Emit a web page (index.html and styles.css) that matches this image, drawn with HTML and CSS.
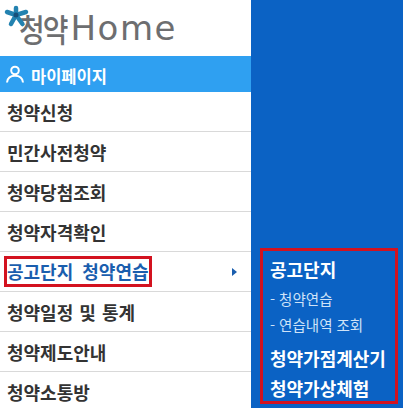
FILE: index.html
```html
<!DOCTYPE html>
<html lang="ko">
<head>
    <meta charset="UTF-8">
    <title>청약Home</title>
    <link rel="stylesheet" href="styles.css">
</head>
<body>
    <div class="layout">
        <aside class="sidebar">
            <div class="logo">
                <span class="logo-ko">청약</span><span class="logo-en">Home</span>
                <svg class="logo-star" width="26" height="26" viewBox="0 0 26 26" fill="none" stroke="#2382b0" stroke-width="4.500" stroke-linecap="round">
                    <path d="M13 12 L13 5"/>
                    <path d="M13 12 L23 9"/>
                    <path d="M13 12 L19.500 21"/>
                    <path d="M13 12 L8 21"/>
                    <path d="M13 12 L4 9"/>
                    <circle cx="13" cy="12" r="2.500" fill="#17507a" stroke="none"/>
                </svg>
            </div>
            <div class="mypage">
                <svg width="18" height="18" viewBox="0 0 18 18" fill="none" stroke="#fff" stroke-width="2">
                    <circle cx="9" cy="5.500" r="3.800"/>
                    <path d="M1 17.500 C1.500 12.800 5 10.800 9 10.800 C13 10.800 16.500 12.800 17 17.500"/>
                </svg>
                <span class="mypage-label">마이페이지</span>
            </div>
            <ul class="menu">
                <li class="menu-item">청약신청</li>
                <li class="menu-item">민간사전청약</li>
                <li class="menu-item">청약당첨조회</li>
                <li class="menu-item">청약자격확인</li>
                <li class="menu-item active">
                    <span class="mark">공고단지 청약연습</span>
                    <span class="arrow"></span>
                </li>
                <li class="menu-item">청약일정 및 통계</li>
                <li class="menu-item">청약제도안내</li>
                <li class="menu-item">청약소통방</li>
            </ul>
        </aside>
        <nav class="submenu">
            <div class="sub-box">
                <div class="sub-title">공고단지</div>
                <div class="sub-links">
                    <div class="sub-link">- 청약연습</div>
                    <div class="sub-link">- 연습내역 조회</div>
                </div>
                <div class="sub-title">청약가점계산기</div>
                <div class="sub-title">청약가상체험</div>
            </div>
        </nav>
    </div>
</body>
</html>
```

FILE: styles.css
```css
body {
    margin: 0;
    overflow: hidden;
    font-family: "Noto Sans CJK KR", "Noto Sans", sans-serif;
}

.layout {
    display: flex;
    height: 408px;
}

.sidebar {
    width: 251px;
    background-color: #fff;
    overflow: hidden;
}

.logo {
    display: flex;
    align-items: center;
    height: 56px;
    padding-left: 19px;
    position: relative;
    box-sizing: border-box;
    color: #6d6e70;
}

.logo-star {
    position: absolute;
    left: 3px;
    top: 3px;
}

.logo-ko {
    font-size: 28px;
    font-weight: 500;
    letter-spacing: -2px;
    transform: scaleY(1.15);
}

.logo-en {
    font-family: "DejaVu Sans", sans-serif;
    font-size: 34px;
    letter-spacing: 1.500px;
    margin-left: 4px;
}

.mypage {
    display: flex;
    align-items: center;
    gap: 7px;
    height: 36px;
    padding-left: 6px;
    background-color: #2fa0f1;
    color: #fff;
    font-size: 16.5px;
    font-weight: 700;
}

.mypage-label {
    margin-top: 3px;
}

.menu {
    list-style: none;
    margin: 0;
    padding: 0;
}

.menu-item {
    display: flex;
    align-items: center;
    justify-content: space-between;
    height: 39px;
    padding: 0 14px 0 7px;
    border-bottom: 1px solid #d9d9d9;
    color: #333;
    font-size: 18px;
    font-weight: 700;
    word-spacing: 1px;
}

.menu-item:last-child {
    border-bottom: none;
}

.active {
    color: #1a5eae;
}

.mark {
    outline: 3px solid #d3121f;
    line-height: 25px;
    white-space: nowrap;
    word-spacing: 4px;
}

.arrow {
    width: 0;
    height: 0;
    border-left: 5px solid #1a5eae;
    border-top: 4px solid transparent;
    border-bottom: 4px solid transparent;
}

.submenu {
    flex: 1;
    background-color: #0b62c4;
    padding: 248px 0 0 9px;
}

.sub-box {
    width: 119px;
    height: 147px;
    padding: 3px 6px 0 7px;
    border: 3px solid #d3121f;
    color: #fff;
}

.sub-title {
    height: 30px;
    line-height: 30px;
    font-size: 18px;
    font-weight: 700;
    white-space: nowrap;
}

.sub-links {
    margin: 2px 0 5px;
}

.sub-link {
    height: 26px;
    line-height: 26px;
    font-size: 14.5px;
    color: #cfe3f8;
    white-space: nowrap;
}
```
